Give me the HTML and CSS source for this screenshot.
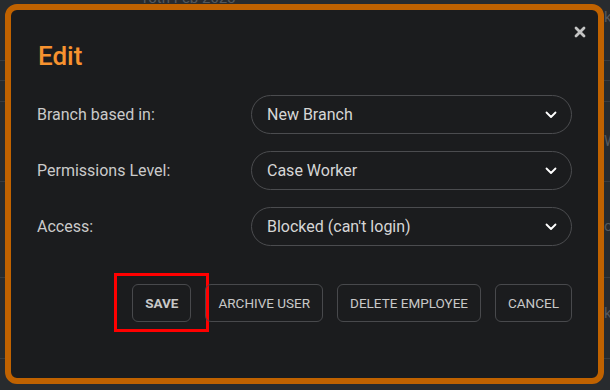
FILE: index.html
```html
<!DOCTYPE html>
<html lang="en">
<head>
    <meta charset="UTF-8">
    <meta name="viewport" content="width=device-width, initial-scale=1.0">
    <title>Edit Employee</title>
    <link rel="stylesheet" href="styles.css">
</head>
<body>

    <!-- page behind the dialog -->
    <div class="page">
        <div class="page-row row-a"><span class="cell-date">13th Feb 2023</span><span class="cell-end">k</span></div>
        <div class="page-row row-b"></div>
        <div class="page-row row-c"></div>
        <div class="page-row row-d"><span class="cell-end">W</span></div>
        <div class="page-row row-e"><span class="cell-end">o</span></div>
        <div class="page-row row-f"><span class="cell-end">k</span></div>
        <div class="page-row row-g"></div>
    </div>

    <div class="modal">
        <button class="close-btn" aria-label="Close">
            <svg width="12" height="12" viewBox="0 0 12 12">
                <path d="M2 2 L10 10 M10 2 L2 10" stroke="#c4c4c4" stroke-width="2.8" stroke-linecap="round"/>
            </svg>
        </button>

        <h1 class="modal-title">Edit</h1>

        <div class="form">
            <div class="form-row">
                <label class="form-label">Branch based in:</label>
                <div class="select">
                    <span>New Branch</span>
                    <svg class="chevron" width="12" height="8" viewBox="0 0 12 8">
                        <path d="M1.5 1.5 L6 6 L10.5 1.5" fill="none" stroke="#ffffff" stroke-width="1.8" stroke-linecap="round" stroke-linejoin="round"/>
                    </svg>
                </div>
            </div>
            <div class="form-row">
                <label class="form-label">Permissions Level:</label>
                <div class="select">
                    <span>Case Worker</span>
                    <svg class="chevron" width="12" height="8" viewBox="0 0 12 8">
                        <path d="M1.5 1.5 L6 6 L10.5 1.5" fill="none" stroke="#ffffff" stroke-width="1.8" stroke-linecap="round" stroke-linejoin="round"/>
                    </svg>
                </div>
            </div>
            <div class="form-row">
                <label class="form-label">Access:</label>
                <div class="select">
                    <span>Blocked (can't login)</span>
                    <svg class="chevron" width="12" height="8" viewBox="0 0 12 8">
                        <path d="M1.5 1.5 L6 6 L10.5 1.5" fill="none" stroke="#ffffff" stroke-width="1.8" stroke-linecap="round" stroke-linejoin="round"/>
                    </svg>
                </div>
            </div>
        </div>

        <div class="actions">
            <button class="btn btn-save">Save</button>
            <button class="btn">Archive User</button>
            <button class="btn">Delete Employee</button>
            <button class="btn">Cancel</button>
        </div>
    </div>

</body>
</html>
```

FILE: styles.css
```css
body, html {
    margin: 0;
    padding: 0;
    height: 100%;
    background-color: #282b2e;
    font-family: Roboto, 'Noto Sans', sans-serif;
    overflow: hidden;
}

.page {
    display: flex;
    flex-direction: column;
}

.page-row {
    position: relative;
    border-bottom: 1px solid #393c40;
    color: #55585c;
    font-size: 15px;
}

.row-a { height: 60px; }
.row-b { height: 19px; }
.row-c { height: 20px; }
.row-d { height: 79px; }
.row-e { height: 95px; }
.row-f { height: 80px; }
.row-g { height: 30px; border-bottom: none; }

.cell-date {
    position: absolute;
    left: 140px;
    top: -11px;
}

.cell-end {
    position: absolute;
    left: 604px;
    top: 8px;
}

.row-d .cell-end { top: 30px; }
.row-e .cell-end { top: 35px; }
.row-f .cell-end { top: 26px; }

.modal {
    position: fixed;
    top: 4px;
    left: 5px;
    width: 599px;
    height: 380px;
    box-sizing: border-box;
    border: 6px solid #c06200;
    border-radius: 12px;
    background-color: #1b1c1e;
    padding: 30px 26px 0 26px;
}

.close-btn {
    position: absolute;
    top: 16px;
    right: 12px;
    padding: 0;
    border: none;
    background: none;
    display: flex;
}

.modal-title {
    margin: 0 0 0 1px;
    font-size: 26px;
    font-weight: 500;
    line-height: 32px;
    color: #f7922f;
}

.form {
    display: flex;
    flex-direction: column;
    gap: 17px;
    margin-top: 23px;
}

.form-row {
    display: flex;
    align-items: center;
}

.form-label {
    width: 214px;
    flex-shrink: 0;
    font-size: 16px;
    color: #cacaca;
}

.select {
    flex: 1;
    height: 39px;
    box-sizing: border-box;
    border: 1px solid #4b4c4f;
    border-radius: 20px;
    display: flex;
    align-items: center;
    justify-content: space-between;
    padding: 0 14px 0 15px;
    font-size: 16px;
    color: #d6d6d6;
}

.actions {
    display: flex;
    justify-content: flex-end;
    gap: 14px;
    margin-top: 38px;
}

.btn {
    position: relative;
    height: 38px;
    padding: 0 12px;
    border: 1px solid #48494c;
    border-radius: 6px;
    background: none;
    font-family: Roboto, 'Noto Sans', sans-serif;
    font-size: 13.5px;
    text-transform: uppercase;
    color: #c8c8c8;
}

.btn-save {
    font-weight: 700;
}

/* highlight box round the save button */
.btn-save::after {
    content: '';
    position: absolute;
    top: -12px;
    bottom: -11px;
    left: -19px;
    right: -19px;
    border: 3px solid #ff0000;
}
```
